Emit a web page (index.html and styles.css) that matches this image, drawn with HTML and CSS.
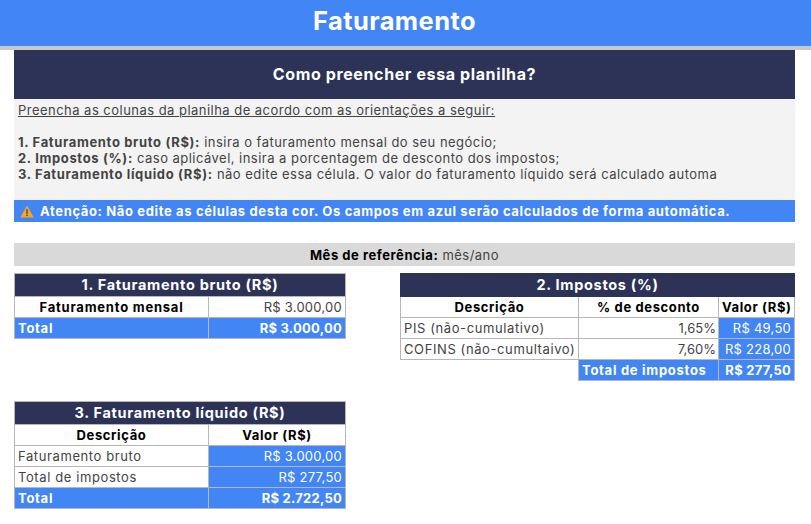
FILE: index.html
```html
<!DOCTYPE html>
<html lang="pt-BR">
<head>
<meta charset="utf-8">
<title>Faturamento</title>
<link rel="stylesheet" href="styles.css">
</head>
<body>
<header class="top">Faturamento</header>
<main class="sheet">
  <h2 class="how">Como preencher essa planilha?</h2>
  <section class="guide">
    <p class="lead">Preencha as colunas da planilha de acordo com as orientações a seguir:</p>
    <p class="steps"><b>1. Faturamento bruto (R$):</b> insira o faturamento mensal do seu negócio;<br>
    <b>2. Impostos (%):</b> caso aplicável, insira a porcentagem de desconto dos impostos;<br>
    <b>3. Faturamento líquido (R$):</b> não edite essa célula. O valor do faturamento líquido será calculado automa</p>
  </section>
  <div class="notice">
    <svg class="warn" width="14" height="13" viewBox="0 0 14 13"><path d="M7 .5 13.8 12.6H.2z" fill="#f6a623"/><path d="M6.3 4.2h1.4l-.2 4.7h-1z" fill="#3a3a3a"/><rect x="6.3" y="9.7" width="1.4" height="1.4" fill="#3a3a3a"/></svg>
    <span>Atenção: Não edite as células desta cor. Os campos em azul serão calculados de forma automática.</span>
  </div>
  <div class="month"><b>Mês de referência:</b> mês/ano</div>
  <div class="tables">
    <table class="t t1">
      <colgroup><col class="c194"><col></colgroup>
      <tr><th colspan="2" class="title">1. Faturamento bruto (R$)</th></tr>
      <tr><th class="wide">Faturamento mensal</th><td class="num">R$ 3.000,00</td></tr>
      <tr class="total"><td>Total</td><td class="num">R$ 3.000,00</td></tr>
    </table>
    <table class="t t2">
      <colgroup><col class="c178"><col class="c140"><col></colgroup>
      <tr><th colspan="3" class="title">2. Impostos (%)</th></tr>
      <tr><th>Descrição</th><th>% de desconto</th><th>Valor (R$)</th></tr>
      <tr><td>PIS (não-cumulativo)</td><td class="num pct">1,65%</td><td class="num blue">R$ 49,50</td></tr>
      <tr><td>COFINS (não-cumultaivo)</td><td class="num pct">7,60%</td><td class="num blue">R$ 228,00</td></tr>
      <tr class="total"><td class="empty"></td><td>Total de impostos</td><td class="num">R$ 277,50</td></tr>
    </table>
    <table class="t t1">
      <colgroup><col class="c194"><col></colgroup>
      <tr><th colspan="2" class="title">3. Faturamento líquido (R$)</th></tr>
      <tr><th>Descrição</th><th>Valor (R$)</th></tr>
      <tr><td>Faturamento bruto</td><td class="num blue">R$ 3.000,00</td></tr>
      <tr><td>Total de impostos</td><td class="num blue">R$ 277,50</td></tr>
      <tr class="total"><td>Total</td><td class="num">R$ 2.722,50</td></tr>
    </table>
  </div>
</main>
</body>
</html>
```
FILE: styles.css
```css
* { box-sizing: border-box; }
html, body { margin: 0; padding: 0; background: #fff; }
body {
  width: 811px;
  height: 524px;
  overflow: hidden;
  font-family: Inter, "Liberation Sans", sans-serif;
  font-size: 13px;
  letter-spacing: 0.47px;
  color: #434343;
}
.top {
  height: 50px;
  padding: 0 22px 4px 0;
  background: #4285f4;
  border-bottom: 4px solid #c9c9c9;
  color: #fff;
  font-size: 25.5px;
  font-weight: 700;
  letter-spacing: 0.4px;
  line-height: 41px;
  text-align: center;
}
.sheet { margin: 0 16px 0 14px; }
.how {
  margin: 0;
  height: 49px;
  background: #2d3356;
  color: #fff;
  font-size: 16px;
  font-weight: 700;
  letter-spacing: 0.62px;
  line-height: 49px;
  text-align: center;
}
.guide {
  height: 101px;
  padding: 3px 4px 0;
  background: #f3f3f3;
  line-height: 16px;
}
.guide p { margin: 0; }
.guide .lead { height: 32px; text-decoration: underline; }
.steps { white-space: nowrap; }
.steps b { font-weight: 700; letter-spacing: 0.65px; }
.notice {
  display: flex;
  align-items: center;
  gap: 6px;
  height: 22px;
  padding-left: 6px;
  background: #4285f4;
  color: #fff;
  font-weight: 700;
  letter-spacing: 0.64px;
}
.month {
  height: 23px;
  margin-top: 21px;
  background: #d9d9d9;
  line-height: 24px;
  text-align: center;
}
.month b { color: #000; letter-spacing: 0.55px; }
.tables {
  display: grid;
  grid-template-columns: 332px 395px;
  justify-content: space-between;
  align-items: start;
  row-gap: 20px;
  margin-top: 7px;
}
.t {
  border-collapse: collapse;
  table-layout: fixed;
  width: 100%;
}
.c194 { width: 194px; }
.c178 { width: 178px; }
.c140 { width: 140px; }
.t th, .t td {
  height: 21px;
  padding: 0 3px;
  border: 1px solid #b7b7b7;
  letter-spacing: 0.6px;
  line-height: 19px;
  white-space: nowrap;
  overflow: hidden;
}
.t th { color: #000; font-weight: 700; letter-spacing: 0.62px; text-align: center; }
.t th.wide { letter-spacing: 0.78px; }
.t th.title {
  height: 23px;
  padding-bottom: 2px;
  background: #2d3356;
  color: #fff;
  font-size: 14.5px;
  letter-spacing: 0.7px;
}
.t td.num { letter-spacing: 0.25px; text-align: right; }
.t td.pct { padding-right: 2px; letter-spacing: 0; }
.t td.blue { background: #4285f4; color: #fff; }
.t .total td { background: #4285f4; color: #fff; font-weight: 700; letter-spacing: 0.72px; }
.t .total td.num { letter-spacing: 0.25px; }
.t .total td.empty { background: #fff; border-width: 1px 0 0 0; }
.t2 th.title { border-color: #2d3356; }
```
